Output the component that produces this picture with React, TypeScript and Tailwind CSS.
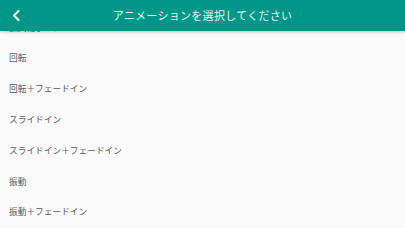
const items = [
  '拡大縮小＋フェードイン',
  '回転',
  '回転＋フェードイン',
  'スライドイン',
  'スライドイン＋フェードイン',
  '振動',
  '振動＋フェードイン',
];

export default function App() {
  return (
    <div
      className="w-[405px] h-[228px] overflow-hidden bg-[#fafafa]"
      style={{ fontFamily: '"Noto Sans CJK JP", "Noto Sans", sans-serif' }}
    >
      {/* Header */}
      <div className="relative z-10 h-[31px] bg-[#009688] shadow-[0_1px_3px_rgba(0,0,0,0.25)] flex items-center">
        <button className="w-[32px] h-[31px] flex items-center justify-center" aria-label="back">
          <svg width="8" height="11" viewBox="0 0 8 11" fill="none">
            <path d="M6.5 1 L2 5.5 L6.5 10" stroke="white" strokeWidth="2" strokeLinecap="round" strokeLinejoin="round" />
          </svg>
        </button>
        <div className="flex-1 text-center pr-[32px] text-[11px] text-white/90 tracking-[0.3px]">
          アニメーションを選択してください
        </div>
      </div>

      {/* List (scrolled) */}
      <div className="-mt-[19.2px]">
        {items.map((label) => (
          <div key={label} className="h-[30.8px] flex items-center px-[9px] text-[8.7px] text-[#5a5a5a]">
            {label}
          </div>
        ))}
      </div>
    </div>
  );
}
